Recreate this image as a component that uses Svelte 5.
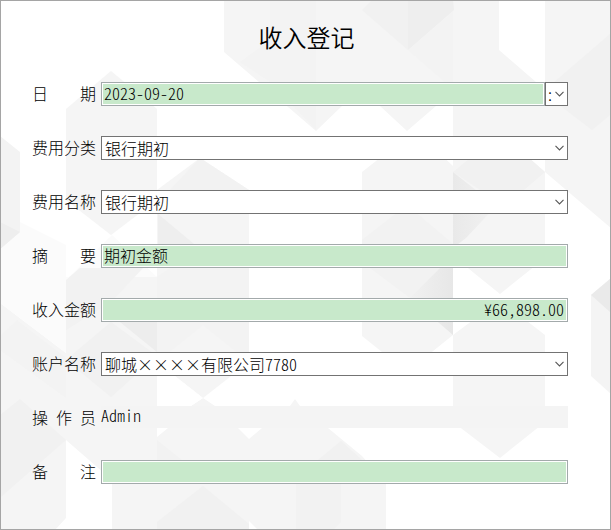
<script lang="ts">
  let date = $state('2023-09-20');
  let picker = $state(':');
  let category = $state('银行期初');
  let item = $state('银行期初');
  let summary = $state('期初金额');
  let amount = $state('¥66,898.00');
  let account = $state('聊城××××有限公司7780');
  let remark = $state('');
  const operator = 'Admin';
</script>

{#snippet chevron()}
  <svg class="chevron" viewBox="0 0 9 6" aria-hidden="true">
    <path d="M0.5 0.9 L4.5 4.9 L8.5 0.9" fill="none" stroke="#555" stroke-width="1.1" />
  </svg>
{/snippet}

<main class="window">
  <svg class="backdrop" viewBox="1 1 609 528" preserveAspectRatio="xMidYMid slice" aria-hidden="true">
    <defs>
      <linearGradient id="fold">
        <stop offset="0" stop-color="#f1f1f1" />
        <stop offset="1" stop-color="#e7e7e7" />
      </linearGradient>
      <linearGradient id="ridge">
        <stop offset="0" stop-color="#e9e9e9" />
        <stop offset="1" stop-color="#f2f2f2" />
      </linearGradient>
    </defs>
    <g fill="#f5f5f5">
      <path d="M224 0H499V50L536 82H545V0H611V228L545 172V160H453V106H436L407 131L380 106H342L316 131L224 52Z" />
      <path d="M111 71L157 109V200L111 235L66 200V109Z" />
      <path d="M157 190L200 158L249 190V362L203 398L157 362Z" />
      <path d="M362 172L390 150H436L453 166V150H520L545 172V258L500 294L453 256V335L407 372L362 336Z" />
      <path d="M500 300L545 335V422L500 458L453 422V335Z" />
      <path d="M0 303L66 353V280L80 268H143L157 277V406H191L203 398L215 406H290L295 399L300 406L328 428L362 456L386 483V530H112V480L66 440V518L55 530H0Z" />
    </g>
    <path d="M0 200L20 222L66 245V280L112 235L157 277H66V353L0 303Z" fill="#fbfbfb" />
    <path d="M0 136L20 152V232L0 249Z" fill="#f3f3f3" />
    <path d="M0 222L20 232L0 249Z" fill="#eeeeee" />
    <path d="M591 295L610 279V393L591 376Z" fill="#f4f4f4" />
    <path d="M591 295L610 279V312Z" fill="#eaeaea" />
    <path d="M270 0H316V130L270 82L240 62L270 40Z" fill="#f3f3f3" />
    <path d="M362 10L372 0H408V50Z" fill="#f1f1f1" />
    <path d="M408 0H453L454 10L408 50Z" fill="#eeeeee" />
    <path d="M408 50L453 12V88L445 82Z" fill="#f3f3f3" />
    <path d="M610 34V115L592 130L545 94V90Z" fill="#f1f1f1" />
    <path d="M158 214V264H218Z" fill="#eeeeee" />
    <path d="M170 190L200 158L249 190L240 200Z" fill="#f2f2f2" />
    <path d="M170 268L157 277V362L203 325L249 362V268Z" fill="#f3f3f3" />
    <path d="M120 322L157 300V352Z" fill="#ededed" />
    <path d="M66 280L80 268H143L111 302L66 330Z" fill="#f2f2f2" />
    <path d="M66 360L111 322L157 356L111 397Z" fill="#f1f1f1" />
    <path d="M362 240L407 205L453 244V330L362 262Z" fill="#f2f2f2" />
    <path d="M410 298L440 268H453V335Z" fill="url(#fold)" />
    <path d="M453 172L480 150H520L545 172L524 190H480Z" fill="#f1f1f1" />
    <path d="M453 172L496 206L466 238L453 248Z" fill="url(#ridge)" />
    <path d="M0 336L17 320L66 358V398L0 350Z" fill="#f3f3f3" />
    <path d="M0 415L20 399L66 440L0 498Z" fill="#f1f1f1" />
    <path d="M157 376H175L203 398L191 406H157Z" fill="#fff" />
    <path d="M157 428H168L157 437Z M238 428H262L249 439Z" fill="#fff" />
    <path d="M157 440L182 460H157Z" fill="#f2f2f2" />
    <path d="M318 460L341 441L362 460Z" fill="#f1f1f1" />
    <path d="M157 522L203 486L249 524V530H157Z" fill="#f1f1f1" />
    <path d="M249 521L258 530H249Z" fill="#fff" />
    <path d="M296 483H341V522L333 530H296Z" fill="#f2f2f2" />
  </svg>

  <form class="entry">
    <h1>收入登记</h1>

    <div class="row">
      <label for="date">日期</label>
      <div class="date">
        <input id="date" class="text" bind:value={date} />
        <div class="combo">
          <select class="picker" aria-label="选择日期" bind:value={picker}>
            <option>:</option>
          </select>
          {@render chevron()}
        </div>
      </div>
    </div>

    <div class="row">
      <label for="category">费用分类</label>
      <div class="combo">
        <select id="category" bind:value={category}>
          <option>银行期初</option>
        </select>
        {@render chevron()}
      </div>
    </div>

    <div class="row">
      <label for="item">费用名称</label>
      <div class="combo">
        <select id="item" bind:value={item}>
          <option>银行期初</option>
        </select>
        {@render chevron()}
      </div>
    </div>

    <div class="row">
      <label for="summary">摘要</label>
      <input id="summary" class="text" bind:value={summary} />
    </div>

    <div class="row">
      <label for="amount">收入金额</label>
      <input id="amount" class="text amount" bind:value={amount} />
    </div>

    <div class="row">
      <label for="account">账户名称</label>
      <div class="combo">
        <select id="account" bind:value={account}>
          <option>聊城××××有限公司7780</option>
        </select>
        {@render chevron()}
      </div>
    </div>

    <div class="row">
      <label for="operator">操作员</label>
      <output id="operator">{operator}</output>
    </div>

    <div class="row">
      <label for="remark">备注</label>
      <input id="remark" class="text" bind:value={remark} />
    </div>
  </form>
</main>

<style>
  .window {
    box-sizing: border-box;
    min-height: 100vh;
    display: grid;
    border: 1px solid #a5a5a5;
    background: #fff;
    color: #000;
    font-family: 'Noto Sans CJK SC', sans-serif;
    font-size: 16px;
    font-weight: 300;
    line-height: 22px;
    font-feature-settings: 'hwid';
  }
  .backdrop,
  .entry {
    grid-area: 1 / 1;
    min-width: 0;
  }
  .backdrop {
    width: 100%;
    height: 100%;
    contain: size;
  }
  .entry {
    z-index: 1;
    display: flex;
    flex-direction: column;
    gap: 30px;
    padding: 18px 42px 40px 31px;
  }
  h1 {
    margin: 0 0 -3px 13px;
    text-align: center;
    font-size: 24px;
    font-weight: 350;
    line-height: 36px;
  }
  .row {
    display: grid;
    grid-template-columns: 64px minmax(0, 1fr);
    column-gap: 5px;
    height: 24px;
  }
  label {
    text-align: justify;
    text-align-last: justify;
    white-space: nowrap;
  }
  input,
  select {
    box-sizing: border-box;
    width: 100%;
    height: 24px;
    margin: 0;
    border-radius: 0;
    color: inherit;
    font: inherit;
    font-feature-settings: inherit;
    outline: none;
  }
  .text {
    padding: 0 3px 2px 2px;
    border: 1px solid #a3aaab;
    background: #c8e9cb;
    box-shadow: inset 0 0 0 1px #fff;
  }
  .amount {
    text-align: right;
  }
  .date {
    display: grid;
    grid-template-columns: minmax(0, 1fr) 23px;
  }
  .combo {
    display: grid;
    align-items: center;
  }
  .combo > :global(*) {
    grid-area: 1 / 1;
  }
  select {
    appearance: none;
    padding: 0 24px 0 3px;
    border: 1px solid #737373;
    background: #fff;
  }
  .picker {
    padding: 0 14px 0 0;
  }
  .chevron {
    width: 9px;
    height: 6px;
    margin-right: 4px;
    justify-self: end;
    pointer-events: none;
  }
  output {
    height: 22px;
    background: #f4f4f4;
    line-height: 18px;
  }
</style>
